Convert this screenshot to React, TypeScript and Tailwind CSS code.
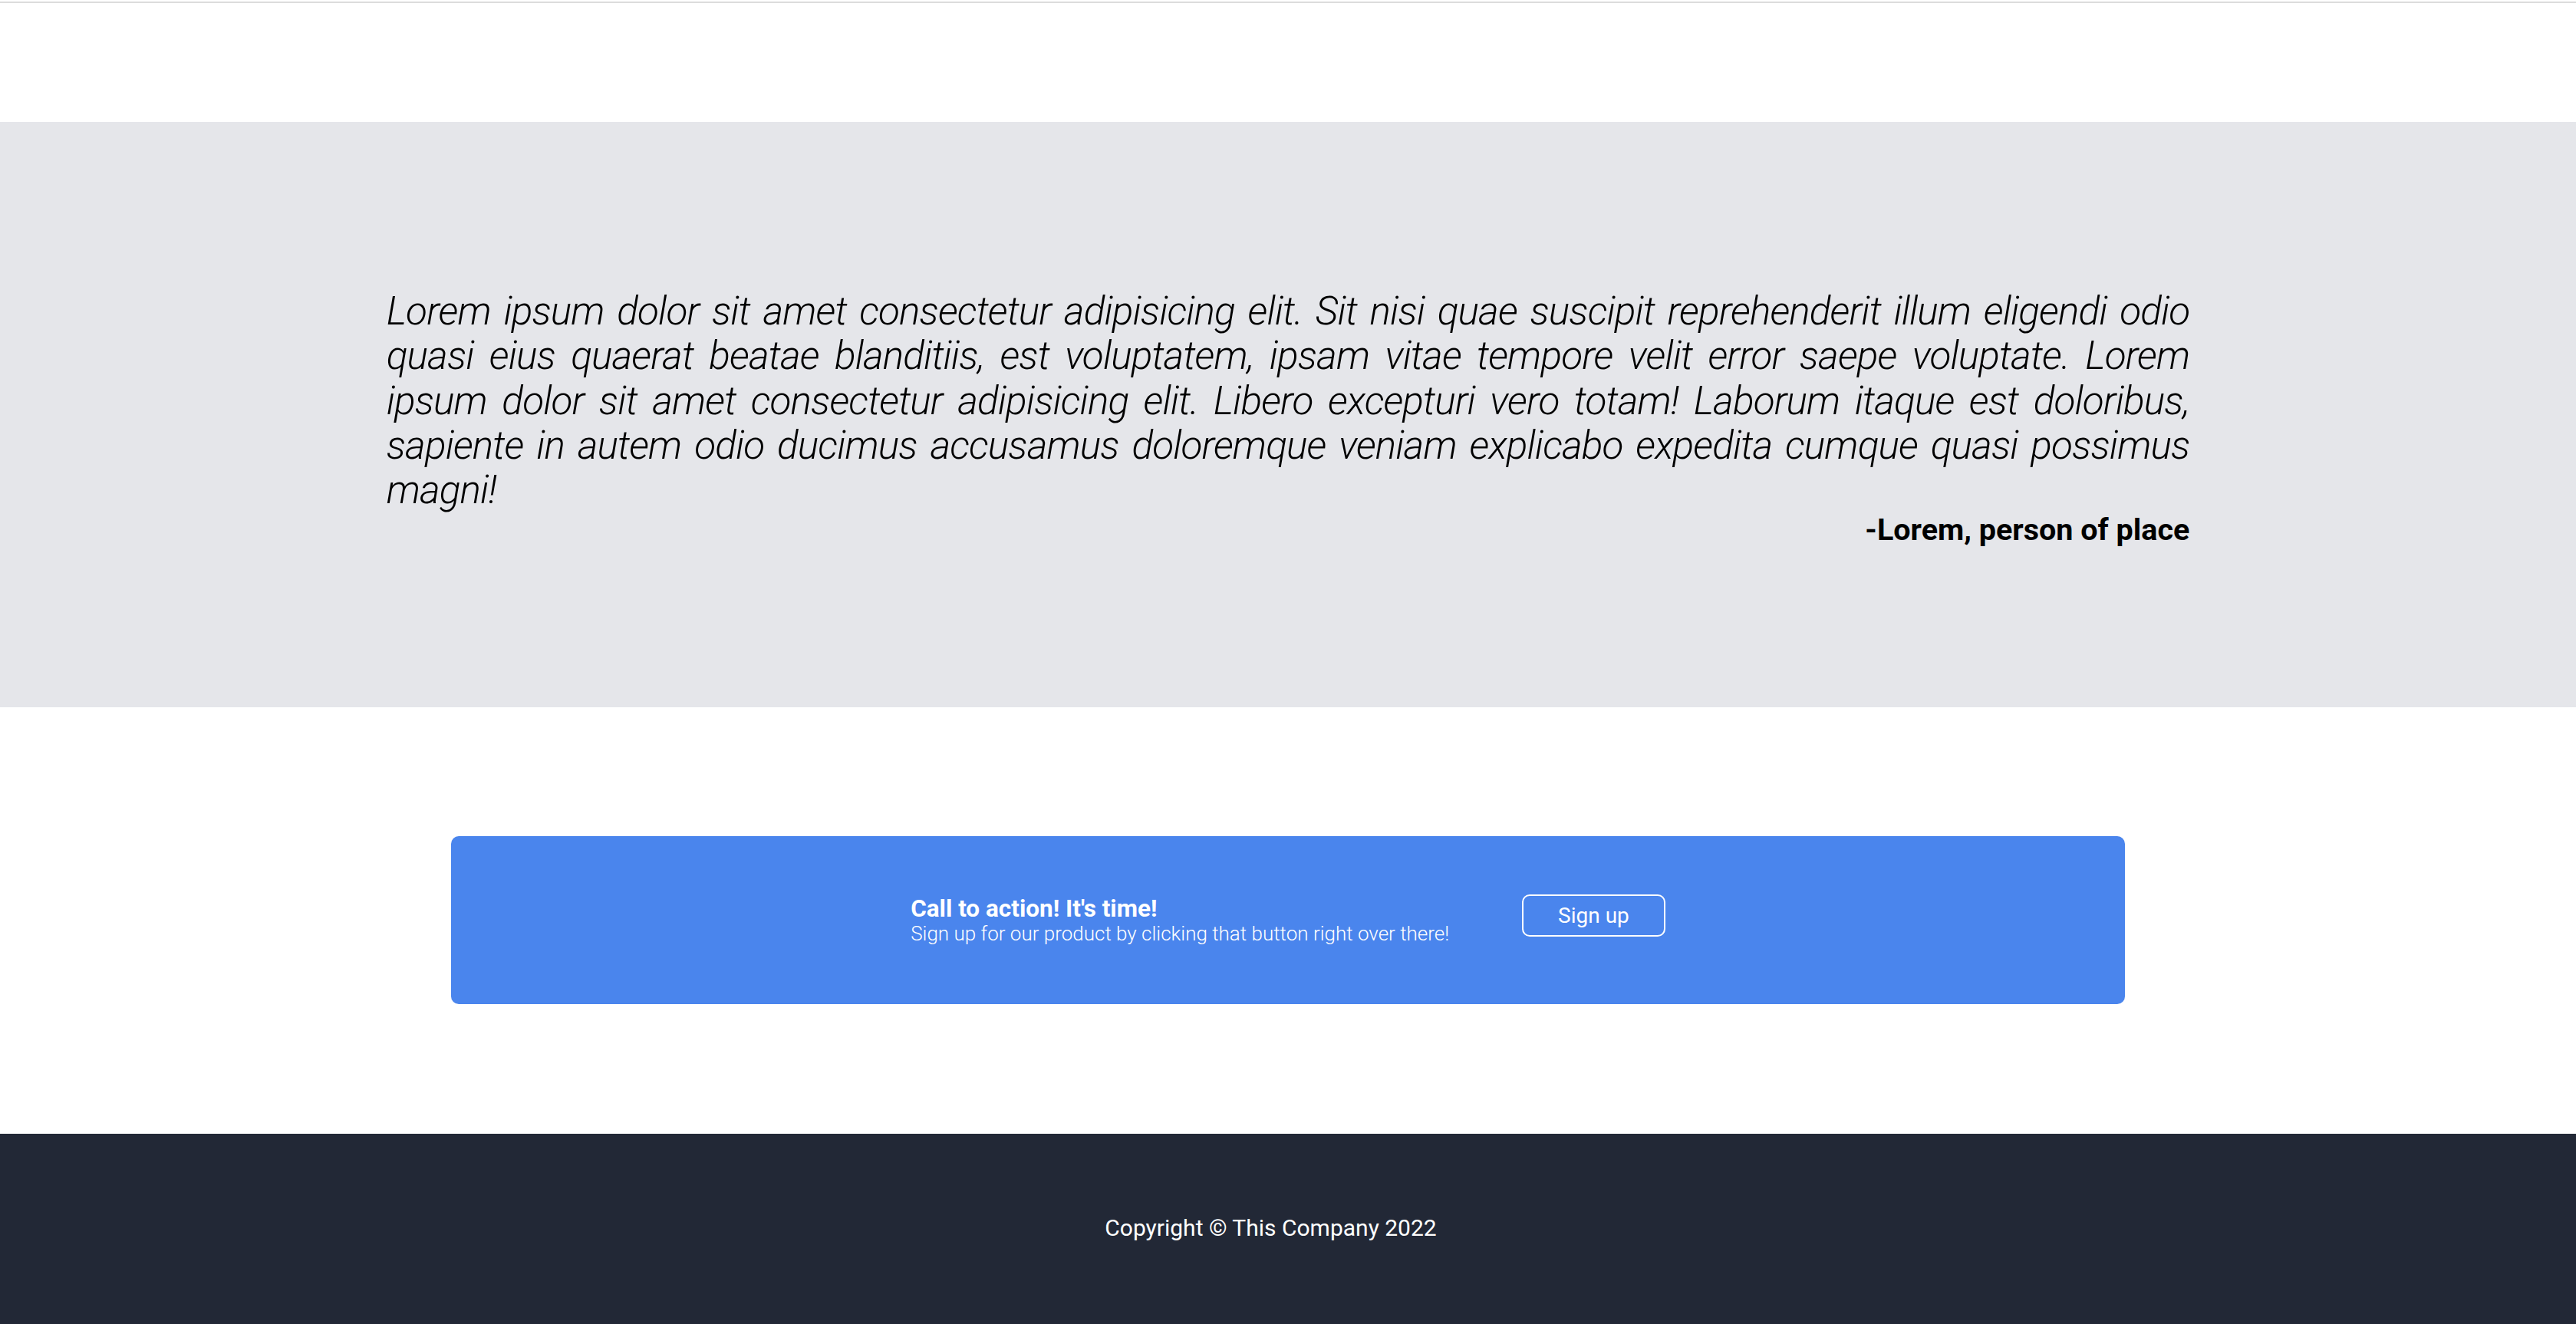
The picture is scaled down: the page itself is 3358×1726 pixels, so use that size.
import React from "react";

const quote =
  "Lorem ipsum dolor sit amet consectetur adipisicing elit. Sit nisi quae suscipit reprehenderit illum eligendi odio quasi eius quaerat beatae blanditiis, est voluptatem, ipsam vitae tempore velit error saepe voluptate. Lorem ipsum dolor sit amet consectetur adipisicing elit. Libero excepturi vero totam! Laborum itaque est doloribus, sapiente in autem odio ducimus accusamus doloremque veniam explicabo expedita cumque quasi possimus magni!";

function TopBar() {
  return (
    <div className="h-[159px] bg-white pt-[2px]">
      <div className="h-[2px] bg-[#dcdcdc]" />
    </div>
  );
}

function Testimonial() {
  return (
    <section className="bg-[#e5e6ea] pt-[218px] pb-[209px]">
      <div className="w-[70%] mx-auto text-black">
        <p className="text-[51.4px] leading-[58.3px] tracking-[-0.9px] font-light italic text-justify">{quote}</p>
        <p className="text-right text-[39.5px] font-bold leading-[45px]">-Lorem, person of place</p>
      </div>
    </section>
  );
}

function CallToAction() {
  return (
    <section className="bg-white pt-[168px] pb-[169px]">
      <div className="w-[65%] mx-auto h-[219px] rounded-[10px] bg-[#4a85ed] flex items-center justify-center">
        <div className="flex items-start gap-[95px] text-white">
          <div className="flex flex-col">
            <span className="text-[31.5px] font-bold leading-[35px]">Call to action! It's time!</span>
            <span className="text-[26px] font-light leading-[30px]">
              Sign up for our product by clicking that button right over there!
            </span>
          </div>
          <button className="-mt-[1px] h-[55px] px-[45px] rounded-[10px] border-2 border-white text-[28px] leading-[33px] text-white">
            Sign up
          </button>
        </div>
      </div>
    </section>
  );
}

function Footer() {
  return (
    <footer className="bg-[#222836] h-[248px] pt-[105px] pr-[45px] text-center">
      <p className="text-[30px] leading-[35px] text-white">Copyright © This Company 2022</p>
    </footer>
  );
}

export default function App() {
  return (
    <div className="min-h-screen bg-white" style={{ fontFamily: "Roboto, 'Liberation Sans', sans-serif" }}>
      <TopBar />
      <Testimonial />
      <CallToAction />
      <Footer />
    </div>
  );
}
